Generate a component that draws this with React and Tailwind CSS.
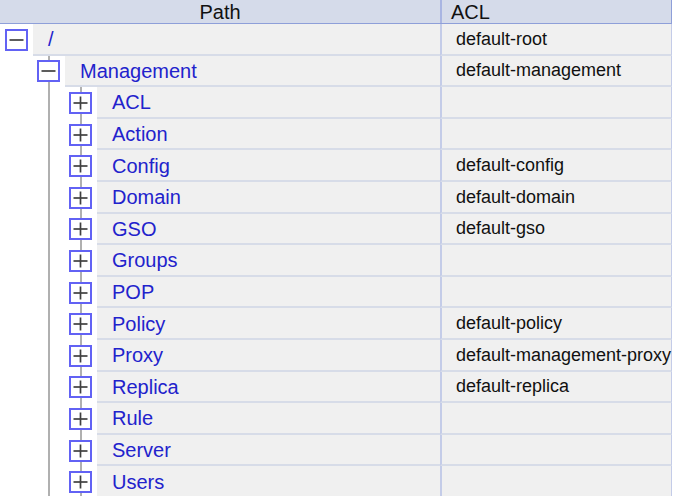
import React from "react";

const rows = [
  { level: 0, label: "/", expanded: true, acl: "default-root" },
  { level: 1, label: "Management", expanded: true, acl: "default-management" },
  { level: 2, label: "ACL", acl: "" },
  { level: 2, label: "Action", acl: "" },
  { level: 2, label: "Config", acl: "default-config" },
  { level: 2, label: "Domain", acl: "default-domain" },
  { level: 2, label: "GSO", acl: "default-gso" },
  { level: 2, label: "Groups", acl: "" },
  { level: 2, label: "POP", acl: "" },
  { level: 2, label: "Policy", acl: "default-policy" },
  { level: 2, label: "Proxy", acl: "default-management-proxy" },
  { level: 2, label: "Replica", acl: "default-replica" },
  { level: 2, label: "Rule", acl: "" },
  { level: 2, label: "Server", acl: "" },
  { level: 2, label: "Users", acl: "" },
];

const LINE =
  "bg-[linear-gradient(to_right,transparent_16px,#b0b0b0_16px,#b0b0b0_18px,transparent_18px)]";
const LINE_BOX =
  "bg-[linear-gradient(to_right,transparent_16px,#b0b0b0_16px,#b0b0b0_18px,transparent_18px)]";

function Expander({ expanded }) {
  return (
    <div className="w-[23px] h-[22px] border-2 border-[#6262f4] bg-white flex items-center justify-center">
      <svg width="17" height="16" viewBox="0 0 17 16">
        <line x1="1.5" y1="8" x2="15.5" y2="8" stroke="#404040" strokeWidth="1.7" />
        {!expanded && (
          <line x1="8.5" y1="1.5" x2="8.5" y2="14.5" stroke="#404040" strokeWidth="1.7" />
        )}
      </svg>
    </div>
  );
}

function Row({ row }) {
  const gutters = [];
  for (let i = 0; i < row.level; i++) {
    const hasLine = row.level === 2 && i === 1;
    gutters.push(
      <div key={i} className={"w-[32px] h-full shrink-0 " + (hasLine ? LINE : "")} />
    );
  }
  const boxLine = row.level >= 1;
  return (
    <div className="flex h-[31.6px]">
      <div className="w-[440px] flex h-full">
        {gutters}
        <div
          className={
            "w-[33px] h-full shrink-0 flex items-center justify-center " +
            (boxLine ? LINE_BOX : "")
          }
        >
          <Expander expanded={row.expanded} />
        </div>
        <div className="flex-1 h-full bg-[#f0f0f0] border-b-2 border-[#d7dce8] flex items-center pl-[15px] pt-[1px] text-[20px] text-[#2222cc] whitespace-nowrap">
          {row.label}
        </div>
      </div>
      <div className="w-[232px] h-full bg-[#f0f0f0] border-l-2 border-r border-l-[#c4cce8] border-r-[#c4cce8] border-b-2 border-b-[#d7dce8] flex items-center pl-[14px] pt-[1px] text-[18px] text-[#111] whitespace-nowrap">
        {row.acl}
      </div>
    </div>
  );
}

export default function App() {
  return (
    <div
      className="w-[674px] h-[496px] overflow-hidden bg-white"
      style={{ fontFamily: '"Liberation Sans", Arial, sans-serif' }}
    >
      <div className="flex h-[24px] border-b border-[#8e9fd9] w-[672px]">
        <div className="w-[442px] h-full bg-[#d5dbea] border-r-2 border-[#a9b5e2] flex items-center justify-center text-[20px] text-[#111]">
          Path
        </div>
        <div className="w-[230px] h-full bg-[#d5dbea] border-r border-[#8e9fd9] flex items-center pl-[9px] text-[20px] text-[#111]">
          ACL
        </div>
      </div>
      {rows.map((r, i) => (
        <Row key={i} row={r} />
      ))}
    </div>
  );
}
